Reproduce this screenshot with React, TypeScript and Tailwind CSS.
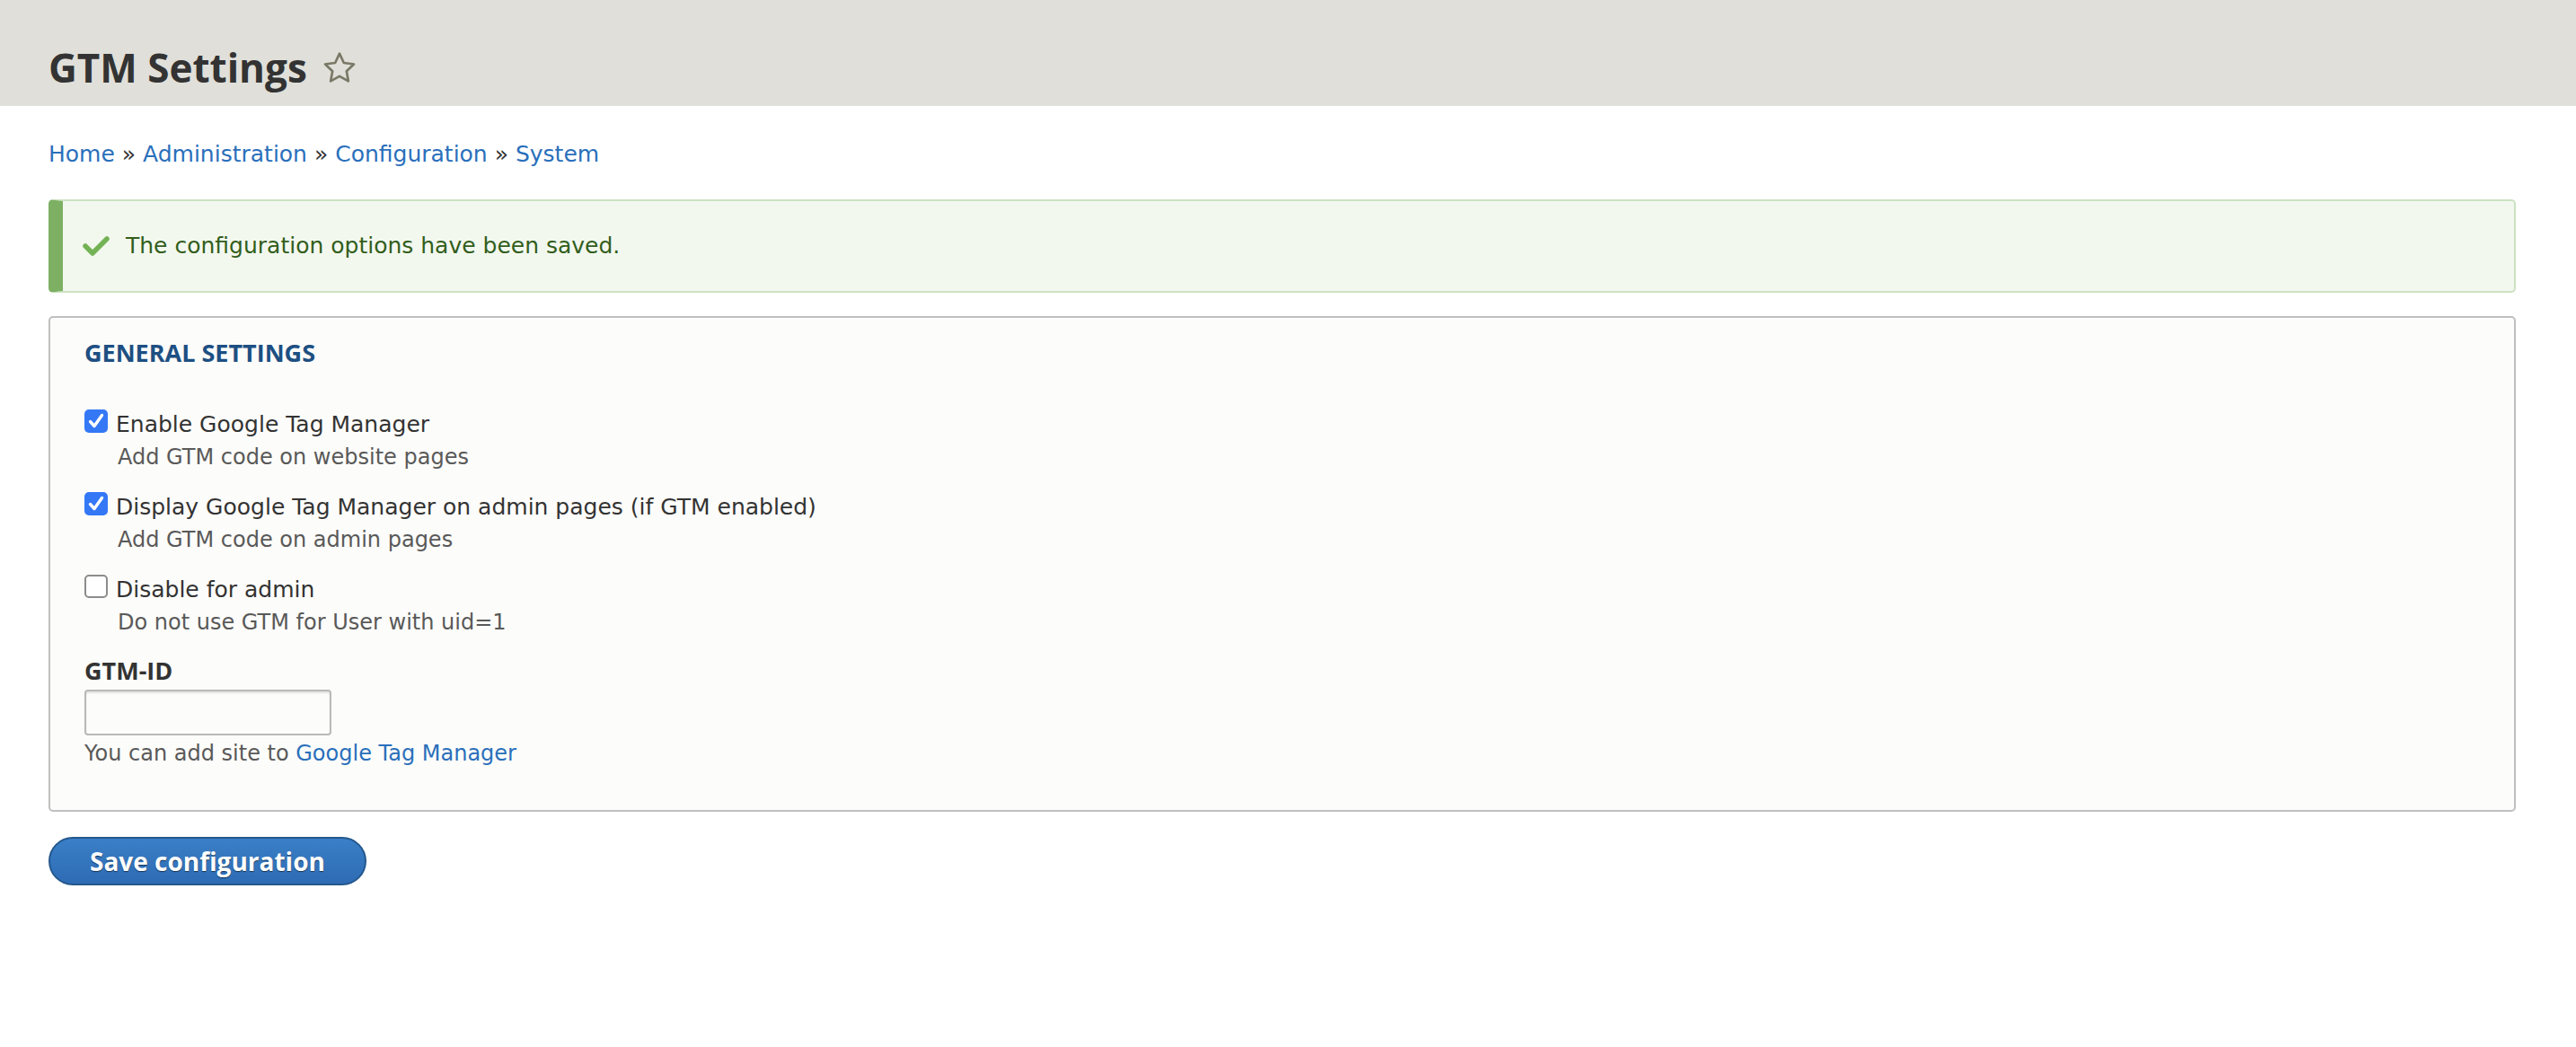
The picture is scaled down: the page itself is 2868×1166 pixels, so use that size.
import React from "react";

const regular = { fontFamily: '"DejaVu Sans", "Liberation Sans", sans-serif' };
const bold = { fontFamily: '"Open Sans", "DejaVu Sans", sans-serif' };

const options = [
  {
    label: "Enable Google Tag Manager",
    description: "Add GTM code on website pages",
    checked: true,
  },
  {
    label: "Display Google Tag Manager on admin pages (if GTM enabled)",
    description: "Add GTM code on admin pages",
    checked: true,
  },
  {
    label: "Disable for admin",
    description: "Do not use GTM for User with uid=1",
    checked: false,
  },
];

const Star = () => (
  <svg width="40" height="40" viewBox="0 0 24 24" className="ml-[16px] mb-[1px]">
    <polygon
      points="12,2.2 14.9,8.4 21.6,9.3 16.7,13.9 17.9,20.6 12,17.3 6.1,20.6 7.3,13.9 2.4,9.3 9.1,8.4"
      fill="none"
      stroke="#7a7866"
      strokeWidth="1.6"
      strokeLinejoin="round"
    />
  </svg>
);

const Checkbox = ({ checked }: { checked: boolean }) =>
  checked ? (
    <span className="flex h-[26px] w-[26px] shrink-0 items-center justify-center rounded-[5px] bg-[#3478f6]">
      <svg width="20" height="20" viewBox="0 0 20 20">
        <path
          d="M3.5 10.5 L8 15.5 L16.5 3.5"
          fill="none"
          stroke="#fff"
          strokeWidth="3.4"
          strokeLinecap="round"
          strokeLinejoin="round"
        />
      </svg>
    </span>
  ) : (
    <span className="h-[26px] w-[26px] shrink-0 rounded-[5px] border-2 border-[#8c8c8c] bg-white" />
  );

export default function App() {
  return (
    <div className="min-h-screen bg-white text-[#333]" style={regular}>
      <header className="h-[118px] bg-[#e0dfd9] pl-[54px] pt-[53px]">
        <div className="flex items-end">
          <h1
            className="text-[44px] font-bold leading-[44px] text-[#333]"
            style={bold}
          >
            GTM Settings
          </h1>
          <Star />
        </div>
      </header>

      <div className="pl-[54px] pr-[67px]">
        <nav className="pt-[39px] text-[25px] leading-[30px]">
          <a className="text-[#2a6fbb]">Home</a> »{" "}
          <a className="text-[#2a6fbb]">Administration</a> »{" "}
          <a className="text-[#2a6fbb]">Configuration</a> »{" "}
          <a className="text-[#2a6fbb]">System</a>
        </nav>

        <div className="mt-[35px] flex h-[104px] items-center rounded-[5px] border-2 border-l-[16px] border-[#cbe2c0] border-l-[#7db063] bg-[#f3f8ef] pl-[21px]">
          <svg width="32" height="26" viewBox="0 0 32 26" className="shrink-0">
            <path
              d="M4 13 L12 21 L28 5"
              fill="none"
              stroke="#73b355"
              strokeWidth="5.5"
              strokeLinecap="round"
              strokeLinejoin="round"
            />
          </svg>
          <p className="ml-[17px] text-[25px] leading-[30px] text-[#325e1c]">
            The configuration options have been saved.
          </p>
        </div>

        <fieldset className="mt-[26px] rounded-[5px] border-2 border-[#bfbfbf] bg-[#fcfcfa] px-[38px] pb-[48px] pt-[24px]">
          <h2
            className="text-[27px] font-bold uppercase leading-[30px] text-[#1d4f82]"
            style={bold}
          >
            General Settings
          </h2>

          <div className="mt-[48px] flex flex-col gap-[24px]">
            {options.map((o) => (
              <div key={o.label}>
                <label className="flex items-start gap-[9px]">
                  <Checkbox checked={o.checked} />
                  <span className="pt-[2px] text-[25px] leading-[30px] text-[#333]">
                    {o.label}
                  </span>
                </label>
                <p className="mt-[6px] pl-[37px] text-[24px] leading-[30px] text-[#595959]">
                  {o.description}
                </p>
              </div>
            ))}
          </div>

          <label
            className="mt-[24px] block text-[27px] font-bold leading-[30px] text-[#333]"
            style={bold}
          >
            GTM-ID
          </label>
          <input
            type="text"
            className="mt-[6px] block h-[51px] w-[275px] rounded-[4px] border-2 border-[#b9b9b9] bg-[#fcfcfa] shadow-[inset_0_2px_2px_rgba(0,0,0,0.1)] outline-none"
          />
          <p className="mt-[5px] text-[24px] leading-[30px] text-[#595959]">
            You can add site to{" "}
            <a className="text-[#2a6fbb]">Google Tag Manager</a>
          </p>
        </fieldset>

        <button
          className="mt-[28px] h-[54px] rounded-full border-2 border-[#24588e] bg-gradient-to-b from-[#3a7fc7] to-[#2e6cb4] px-[44px] text-[28px] font-bold text-white [text-shadow:0_1px_1px_rgba(0,0,0,0.55)]"
          style={bold}
        >
          Save configuration
        </button>
      </div>
    </div>
  );
}
